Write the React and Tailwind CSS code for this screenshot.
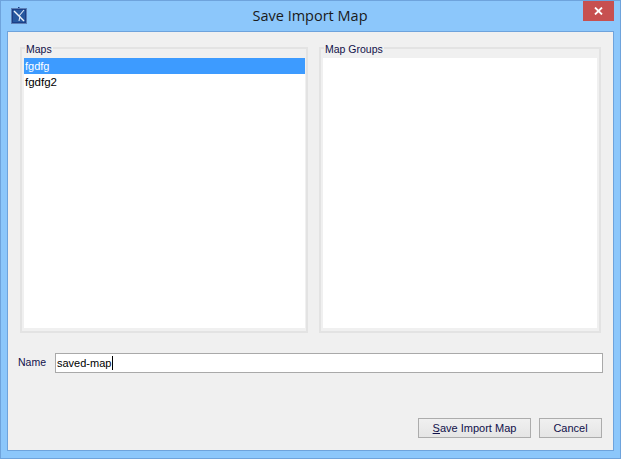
import React from "react";

const uiFont = "font-['Liberation_Sans','Noto_Sans',sans-serif]";

function ListPanel({ title, children, className, innerClass }) {
  return (
    <fieldset className={`m-0 h-[292px] min-w-0 border-2 border-[#e3e3e3] p-0 ${className}`}>
      <legend className="ml-[3px] h-[14px] px-[1px] text-[10.5px] leading-[16px] text-[#10104a]">{title}</legend>
      <div className={`ml-[2px] mt-[3px] h-[270px] bg-white ${innerClass}`}>{children}</div>
    </fieldset>
  );
}

function AppIcon() {
  return (
    <svg width="16" height="17" viewBox="0 0 16 17" className="block">
      <path d="M7 0h1.5v2H7z" fill="#1c3f86" />
      <rect x="0.5" y="1.5" width="15" height="15" fill="#1b3f88" stroke="#5d7fb5" />
      <path d="M2 3h12v12H2z" fill="#27589f" />
      <path d="M3 4l10 10" stroke="#f2f6fc" strokeWidth="1.4" fill="none" />
      <path d="M13 3L8 9M9 9l-1 5" stroke="#dfe9f7" strokeWidth="1.1" fill="none" />
    </svg>
  );
}

export default function App() {
  return (
    <div className={`flex h-[459px] w-[621px] flex-col border border-[#6ea3dc] bg-[#8cc7fb] ${uiFont}`}>
      {/* title bar */}
      <div className="flex h-[30px] shrink-0 items-start">
        <div className="ml-[10px] mt-[6px] w-[16px]">
          <AppIcon />
        </div>
        <div className="flex-1 pl-[10px] pt-[5px] text-center font-['Open_Sans',sans-serif] text-[14.5px] leading-[20px] text-[#1a1a1a]">
          Save Import Map
        </div>
        <div className="mr-[6px] flex h-[20px] w-[31px] items-center justify-center bg-[#c75050]">
          <svg width="9" height="8" viewBox="0 0 9 8">
            <path d="M1 0.5l7 7M8 0.5l-7 7" stroke="#fff" strokeWidth="1.8" fill="none" />
          </svg>
        </div>
      </div>

      {/* dialog body */}
      <div className="mx-[6px] mb-[7px] flex flex-1 flex-col border border-[#6ea3dc] bg-[#f0f0f0] pl-[10px] pr-[9px]">
        <div className="ml-[2px] mt-[9px] flex gap-[11px]">
          <ListPanel title="Maps" className="w-[288px]" innerClass="mr-[1px]">
            <div className="bg-[#3d9bff] pl-[1px] text-[11px] leading-[16px] text-white">fgdfg</div>
            <div className="pl-[1px] text-[11.5px] leading-[17px] text-black">fgdfg2</div>
          </ListPanel>
          <ListPanel title="Map Groups" className="w-[282px]" innerClass="mr-[2px]" />
        </div>

        <div className="mt-[20px] flex items-center">
          <span className="w-[37px] text-[10.5px] text-[#10104a]">Name</span>
          <div className="flex h-[20px] w-[548px] items-center border border-[#a9a9a9] bg-white pl-[1px] text-[11px] text-black">
            saved-map
            <span className="ml-[0.5px] h-[14px] w-px bg-black" />
          </div>
        </div>

        <div className="mr-[2px] mt-[45px] flex justify-end gap-[8px]">
          <button className="h-[20px] w-[113px] border border-[#acacac] bg-gradient-to-b from-[#f0f0f0] to-[#e5e5e5] text-[11px] leading-[18px] text-[#10104a]">
            <span className="underline">S</span>ave Import Map
          </button>
          <button className="h-[20px] w-[63px] border border-[#acacac] bg-gradient-to-b from-[#f0f0f0] to-[#e5e5e5] text-[11px] leading-[18px] text-[#10104a]">
            Cancel
          </button>
        </div>
      </div>
    </div>
  );
}
